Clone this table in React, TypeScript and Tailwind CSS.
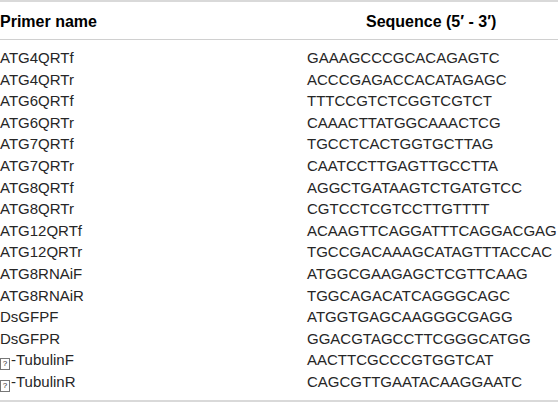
const ROWS: [string, string][] = [
  ['ATG4QRTf', 'GAAAGCCCGCACAGAGTC'],
  ['ATG4QRTr', 'ACCCGAGACCACATAGAGC'],
  ['ATG6QRTf', 'TTTCCGTCTCGGTCGTCT'],
  ['ATG6QRTr', 'CAAACTTATGGCAAACTCG'],
  ['ATG7QRTf', 'TGCCTCACTGGTGCTTAG'],
  ['ATG7QRTr', 'CAATCCTTGAGTTGCCTTA'],
  ['ATG8QRTf', 'AGGCTGATAAGTCTGATGTCC'],
  ['ATG8QRTr', 'CGTCCTCGTCCTTGTTTT'],
  ['ATG12QRTf', 'ACAAGTTCAGGATTTCAGGACGAG'],
  ['ATG12QRTr', 'TGCCGACAAAGCATAGTTTACCAC'],
  ['ATG8RNAiF', 'ATGGCGAAGAGCTCGTTCAAG'],
  ['ATG8RNAiR', 'TGGCAGACATCAGGGCAGC'],
  ['DsGFPF', 'ATGGTGAGCAAGGGCGAGG'],
  ['DsGFPR', 'GGACGTAGCCTTCGGGCATGG'],
  ['?-TubulinF', 'AACTTCGCCCGTGGTCAT'],
  ['?-TubulinR', 'CAGCGTTGAATACAAGGAATC'],
];

// missing-glyph box, as the source font couldn't render the beta
function Tofu() {
  return (
    <span className="inline-flex items-center justify-center w-[10px] h-[12px] border border-[#777] text-[8px] leading-none align-[-1px] mr-[1px]">
      ?
    </span>
  );
}

function Name({ name }: { name: string }) {
  if (!name.startsWith('?')) return <>{name}</>;
  return (
    <>
      <Tofu />
      {name.slice(1)}
    </>
  );
}

export default function App() {
  return (
    <div className="w-[558px] h-[404px] bg-white overflow-hidden font-['Liberation_Sans',Arial,sans-serif] text-[15px] text-[#262626]">
      <div className="border-t-2 border-[#d9d9d9]" />
      <div className="grid grid-cols-[307px_1fr] h-[38px] pt-[3px] items-center border-b border-[#d0d0d0] font-bold text-[16px] text-black">
        <div>Primer name</div>
        <div className="pl-[59px]">Sequence (5′ - 3′)</div>
      </div>
      <div className="pt-[7px] pb-[7px] border-b-2 border-[#d9d9d9]">
        {ROWS.map(([name, seq]) => (
          <div key={name} className="grid grid-cols-[307px_1fr] h-[21.6px] items-center whitespace-nowrap">
            <div>
              <Name name={name} />
            </div>
            <div>{seq}</div>
          </div>
        ))}
      </div>
    </div>
  );
}
